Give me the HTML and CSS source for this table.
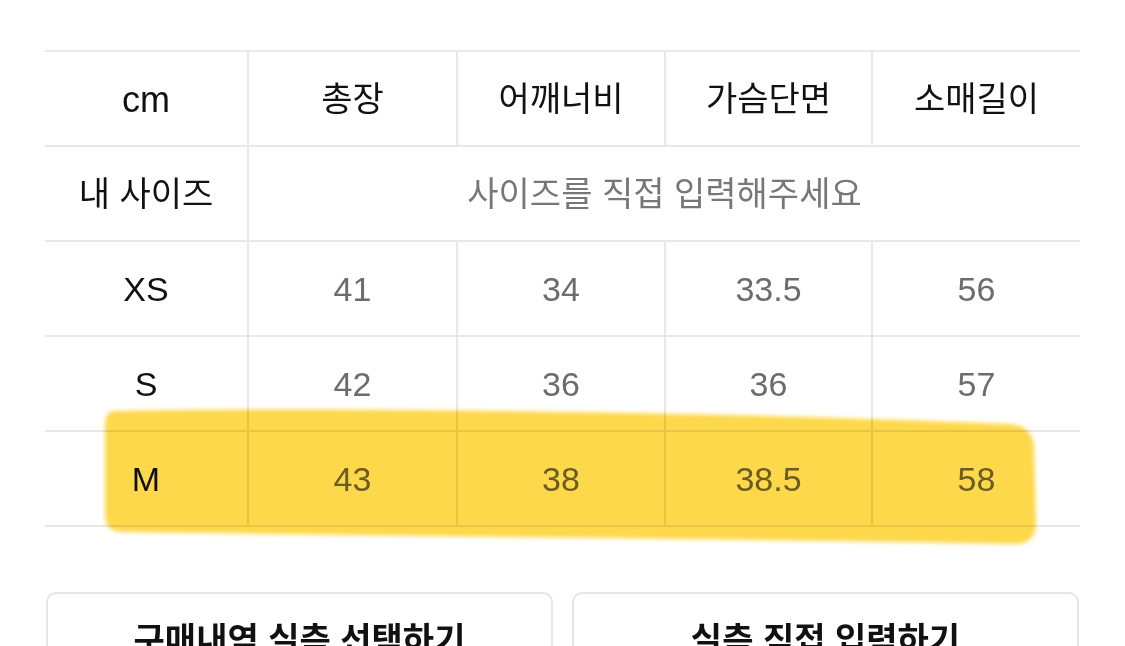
FILE: index.html
```html
<!DOCTYPE html>
<html lang="ko">
<head>
<meta charset="utf-8">
<title>사이즈표</title>
<link rel="stylesheet" href="styles.css">
</head>
<body>
<div class="page">
  <table class="size-table">
    <colgroup>
      <col class="c1"><col class="c2"><col class="c3"><col class="c4"><col class="c5">
    </colgroup>
    <tr class="head">
      <th class="unit">cm</th>
      <th>총장</th>
      <th>어깨너비</th>
      <th>가슴단면</th>
      <th>소매길이</th>
    </tr>
    <tr>
      <th class="label-ko">내 사이즈</th>
      <td class="placeholder" colspan="4">사이즈를 직접 입력해주세요</td>
    </tr>
    <tr>
      <th class="size">XS</th><td>41</td><td>34</td><td>33.5</td><td>56</td>
    </tr>
    <tr>
      <th class="size">S</th><td>42</td><td>36</td><td>36</td><td>57</td>
    </tr>
    <tr>
      <th class="size">M</th><td>43</td><td>38</td><td>38.5</td><td>58</td>
    </tr>
  </table>

  <div class="actions">
    <button class="btn">구매내역 실측 선택하기</button>
    <button class="btn">실측 직접 입력하기</button>
  </div>

  <svg class="marker" width="1125" height="646" viewBox="0 0 1125 646" aria-hidden="true">
    <defs>
      <filter id="soft" x="-5%" y="-20%" width="110%" height="140%">
        <feGaussianBlur stdDeviation="2"/>
      </filter>
    </defs>
    <path filter="url(#soft)" fill="#fdd84c" d="M114 411 C 300 407, 700 411, 1008 424 Q 1033 425 1034 448 L 1036 522 Q 1036 545 1013 544 C 800 540, 420 536, 120 532 Q 105 531 105 514 L 105 425 Q 105 411 114 411 Z"/>
  </svg>
</div>
</body>
</html>
```

FILE: styles.css
```css
html, body {
  margin: 0;
  padding: 0;
  background: #ffffff;
}

body {
  width: 1125px;
  height: 646px;
  overflow: hidden;
  font-family: "Liberation Sans", "Noto Sans CJK KR", sans-serif;
  color: #111111;
}

.page {
  position: relative;
  padding: 50px 45px 0 45px;
}

.size-table {
  border-collapse: collapse;
  table-layout: fixed;
  width: 1035px;
}

.c1 { width: 203px; }
.c2 { width: 209px; }
.c3 { width: 208px; }
.c4 { width: 207px; }
.c5 { width: 208px; }

.size-table th,
.size-table td {
  box-sizing: border-box;
  height: 95px;
  padding: 0;
  line-height: 40px;
  text-align: center;
  vertical-align: middle;
  border: 2px solid #e8e8e8;
}

.size-table tr > :first-child { border-left: none; }
.size-table tr > :last-child { border-right: none; }

.size-table th {
  font-family: "Noto Sans CJK KR", sans-serif;
  font-weight: 400;
  font-size: 34px;
  color: #111111;
  padding-bottom: 4px;
}

.size-table th.unit,
.size-table th.size {
  font-family: "Liberation Sans", sans-serif;
  font-weight: 400;
  padding-bottom: 0;
}

.size-table th.unit {
  font-size: 36px;
  padding-top: 2px;
}

.size-table th.size {
  font-size: 34px;
}

.size-table td {
  font-size: 34px;
  color: #6c6c6c;
}

.size-table td.placeholder {
  font-family: "Noto Sans CJK KR", sans-serif;
  font-size: 34px;
  color: #777777;
  padding-bottom: 4px;
}

.actions {
  display: flex;
  gap: 19px;
  margin-top: 65px;
  padding-left: 1px;
}

.btn {
  flex: 0 0 507px;
  height: 96px;
  box-sizing: border-box;
  border: 2px solid #e6e6e6;
  border-radius: 10px;
  background: #ffffff;
  font-family: "Noto Sans CJK KR", sans-serif;
  font-weight: 700;
  font-size: 34px;
  line-height: 1;
  color: #111111;
  padding: 0;
  padding-bottom: 4px;
}

.marker {
  position: absolute;
  left: 0;
  top: 0;
  pointer-events: none;
  mix-blend-mode: multiply;
}
```
